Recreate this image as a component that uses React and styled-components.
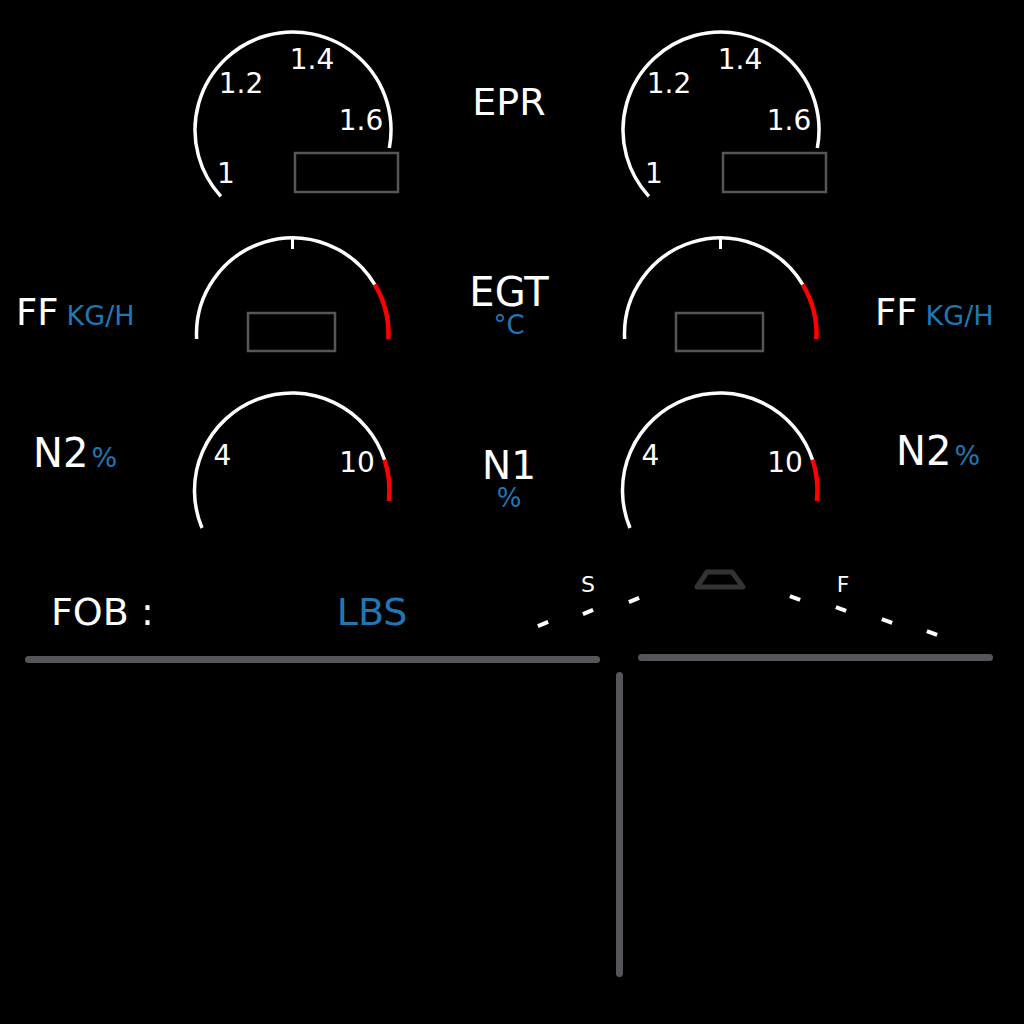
import React from "react";
import styled, { createGlobalStyle } from "styled-components";

const BLUE = "#1f77b4";
const GREY = "#55555a";

const GlobalStyle = createGlobalStyle`
  html, body { margin: 0; padding: 0; background: #000; }
  #root { width: 1024px; height: 1024px; }
`;

const Screen = styled.div`
  width: 1024px;
  height: 1024px;
  box-sizing: border-box;
  padding-top: 20px;
  background: #000;
  color: #fff;
  font-family: "DejaVu Sans", "Noto Sans", sans-serif;
  overflow: hidden;
`;

const EngineGrid = styled.div`
  display: grid;
  grid-template-columns: 185px 220px 208px 220px 191px;
  grid-template-rows: 190px 160px 170px;
`;

const CenterLabel = styled.div`
  display: flex;
  flex-direction: column;
  align-items: center;
  padding-top: ${(p) => p.$top}px;
`;

const Title = styled.div`
  font-size: ${(p) => p.$size}px;
  line-height: 1;
`;

const Unit = styled.div`
  color: ${BLUE};
  font-size: 26px;
  line-height: 1;
`;

const SideLabel = styled.div`
  display: flex;
  align-items: baseline;
  padding-top: ${(p) => p.$top}px;
  padding-left: ${(p) => p.$left}px;
  gap: ${(p) => p.$gap}px;
`;

const SideName = styled.span`
  font-size: ${(p) => p.$size}px;
  line-height: 1;
`;

const SideUnit = styled.span`
  color: ${BLUE};
  font-size: 27px;
  line-height: 1;
`;

const GaugeSvg = styled.svg`
  display: block;
  overflow: visible;
`;

const Arc = styled.path`
  fill: none;
  stroke: ${(p) => p.$color || "#fff"};
  stroke-width: ${(p) => p.$w || 3.5}px;
`;

const Tick = styled.line`
  stroke: #fff;
  stroke-width: 3px;
`;

const ValueBox = styled.rect`
  fill: none;
  stroke: ${GREY};
  stroke-width: 2.5px;
`;

const GaugeNumber = styled.text`
  fill: #fff;
  font-family: "DejaVu Sans", sans-serif;
  font-size: 28px;
  text-anchor: middle;
`;

const FuelRow = styled.div`
  display: flex;
  height: 105px;
`;

const FobBlock = styled.div`
  display: flex;
  align-items: baseline;
  box-sizing: border-box;
  width: 530px;
  padding: 53px 0 0 51px;
`;

const FobLabel = styled.span`
  font-size: 38px;
  line-height: 1;
`;

const FobUnit = styled.span`
  font-size: 38px;
  line-height: 1;
  color: ${BLUE};
  margin-left: 183px;
`;

const FlapsSvg = styled.svg`
  display: block;
  margin-top: 20px;
  overflow: visible;
`;

const FlapText = styled.text`
  fill: #fff;
  font-family: "DejaVu Sans", sans-serif;
  font-size: 22px;
  text-anchor: middle;
`;

const FlapDash = styled.line`
  stroke: #fff;
  stroke-width: 4px;
`;

const FlapBody = styled.path`
  fill: none;
  stroke: #333;
  stroke-width: 5px;
  stroke-linejoin: round;
`;

const DividerRow = styled.div`
  display: flex;
  align-items: flex-start;
  height: 20px;
`;

const HBar = styled.div`
  height: 7px;
  width: ${(p) => p.$width}px;
  margin-left: ${(p) => p.$left}px;
  margin-top: ${(p) => p.$top}px;
  border-radius: 4px;
  background: ${GREY};
`;

const VBar = styled.div`
  width: 7px;
  height: 305px;
  margin-left: 615.5px;
  margin-top: 7px;
  border-radius: 4px;
  background: ${GREY};
`;

const rad = (a) => (a * Math.PI) / 180;
const pt = (cx, cy, r, a) => [cx + r * Math.sin(rad(a)), cy - r * Math.cos(rad(a))];
const arcPath = (cx, cy, r, a1, a2) => {
  const [x1, y1] = pt(cx, cy, r, a1);
  const [x2, y2] = pt(cx, cy, r, a2);
  const large = a2 - a1 > 180 ? 1 : 0;
  return `M${x1.toFixed(2)} ${y1.toFixed(2)} A${r} ${r} 0 ${large} 1 ${x2.toFixed(2)} ${y2.toFixed(2)}`;
};

const GAUGES = {
  epr: {
    h: 190,
    cx: 108,
    cy: 110,
    r: 98,
    start: -132.6,
    end: 100.6,
    labels: [
      { t: "1", x: 41, y: 163 },
      { t: "1.2", x: 56, y: 73 },
      { t: "1.4", x: 127, y: 49 },
      { t: "1.6", x: 176, y: 110 },
    ],
    box: { x: 110, y: 133, w: 103, h: 39 },
  },
  egt: {
    h: 160,
    cx: 107.5,
    cy: 124,
    r: 96,
    start: -93,
    end: 93,
    red: 59,
    tick: true,
    box: { x: 63, y: 103, w: 87, h: 38 },
  },
  n1: {
    h: 170,
    cx: 107,
    cy: 120.5,
    r: 97.5,
    start: -112.6,
    end: 96.2,
    red: 71.7,
    labels: [
      { t: "4", x: 37.5, y: 95 },
      { t: "10", x: 172, y: 102 },
    ],
  },
};

function Gauge({ kind }) {
  const g = GAUGES[kind];
  const whiteEnd = g.red != null ? g.red : g.end;
  return (
    <GaugeSvg width="220" height={g.h} viewBox={`0 0 220 ${g.h}`}>
      <Arc d={arcPath(g.cx, g.cy, g.r, g.start, whiteEnd)} />
      {g.red != null && (
        <Arc $color="#ff0000" $w={4.5} d={arcPath(g.cx, g.cy, g.r, g.red, g.end)} />
      )}
      {g.tick && <Tick x1={g.cx} y1={g.cy - g.r} x2={g.cx} y2={g.cy - g.r + 11} />}
      {g.box && <ValueBox x={g.box.x} y={g.box.y} width={g.box.w} height={g.box.h} />}
      {(g.labels || []).map((l) => (
        <GaugeNumber key={l.t} x={l.x} y={l.y}>
          {l.t}
        </GaugeNumber>
      ))}
    </GaugeSvg>
  );
}

const DASHES = [
  { x: 13, y: 64, a: -22 },
  { x: 58, y: 52, a: -22 },
  { x: 104, y: 40, a: -22 },
  { x: 265, y: 38, a: 21 },
  { x: 311, y: 49, a: 21 },
  { x: 357, y: 61, a: 21 },
  { x: 402, y: 73, a: 21 },
];

function Flaps() {
  return (
    <FlapsSvg width="420" height="80" viewBox="0 0 420 80">
      <FlapText x="58" y="32">S</FlapText>
      <FlapText x="313" y="32">F</FlapText>
      <FlapBody d="M177 12 L202 12 L213 27 L167 27 Z" />
      {DASHES.map((d, i) => {
        const dx = 5.5 * Math.cos(rad(d.a));
        const dy = 5.5 * Math.sin(rad(d.a));
        return <FlapDash key={i} x1={d.x - dx} y1={d.y - dy} x2={d.x + dx} y2={d.y + dy} />;
      })}
    </FlapsSvg>
  );
}

export default function App() {
  return (
    <>
      <GlobalStyle />
      <Screen>
        <EngineGrid>
          <div />
          <Gauge kind="epr" />
          <CenterLabel $top={63}>
            <Title $size={38}>EPR</Title>
          </CenterLabel>
          <Gauge kind="epr" />
          <div />

          <SideLabel $top={84} $left={16} $gap={8}>
            <SideName $size={37}>FF</SideName>
            <SideUnit>KG/H</SideUnit>
          </SideLabel>
          <Gauge kind="egt" />
          <CenterLabel $top={62}>
            <Title $size={40}>EGT</Title>
            <Unit>°C</Unit>
          </CenterLabel>
          <Gauge kind="egt" />
          <SideLabel $top={84} $left={42} $gap={8}>
            <SideName $size={37}>FF</SideName>
            <SideUnit>KG/H</SideUnit>
          </SideLabel>

          <SideLabel $top={63} $left={33} $gap={3}>
            <SideName $size={40}>N2</SideName>
            <SideUnit>%</SideUnit>
          </SideLabel>
          <Gauge kind="n1" />
          <CenterLabel $top={76}>
            <Title $size={39}>N1</Title>
            <Unit>%</Unit>
          </CenterLabel>
          <Gauge kind="n1" />
          <SideLabel $top={61} $left={63} $gap={3}>
            <SideName $size={40}>N2</SideName>
            <SideUnit>%</SideUnit>
          </SideLabel>
        </EngineGrid>

        <FuelRow>
          <FobBlock>
            <FobLabel>FOB :</FobLabel>
            <FobUnit>LBS</FobUnit>
          </FobBlock>
          <Flaps />
        </FuelRow>

        <DividerRow>
          <HBar $left={25} $width={575} $top={11} />
          <HBar $left={38} $width={355} $top={9} />
        </DividerRow>
        <VBar />
      </Screen>
    </>
  );
}
